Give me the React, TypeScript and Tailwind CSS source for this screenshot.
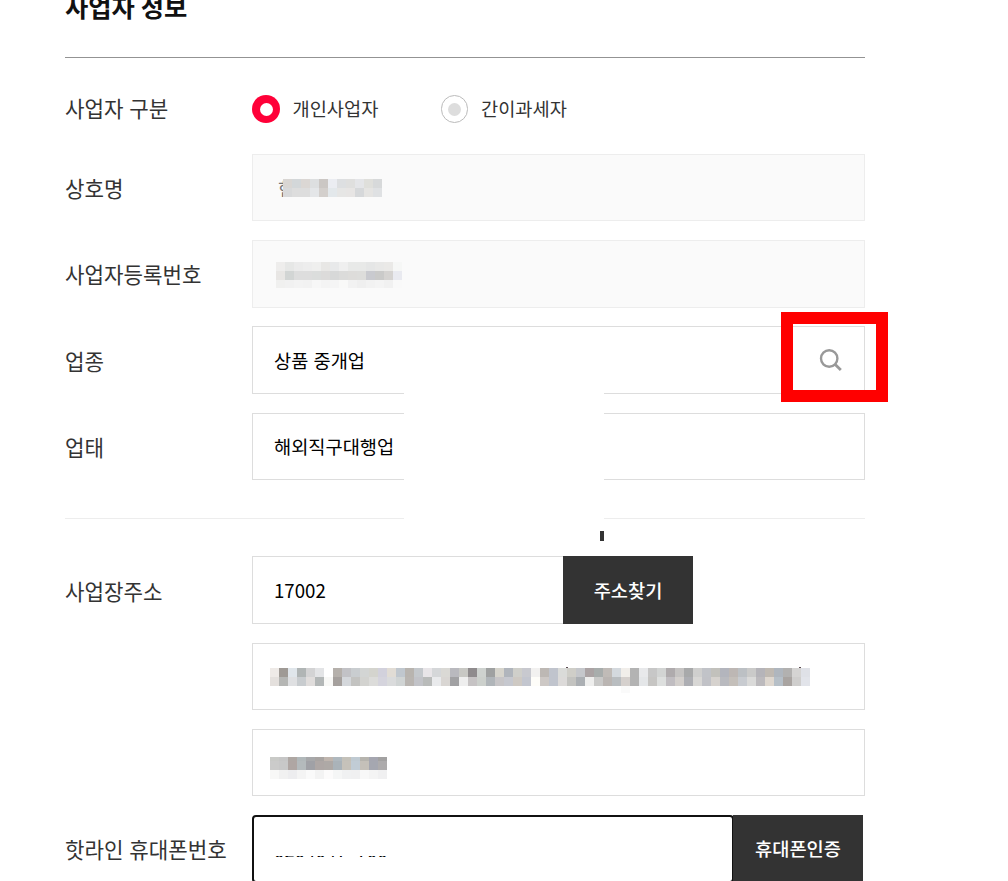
import { ReactNode } from 'react'

// 모자이크 한 칸은 9px
const nameMosaic = [
    'd9d6d3 d3d7d9 dbd7d4 dddfe0 cbc7c4 ebedf2 dddfe1 dfdfde e4e5e8 dfdfdb d7d9da',
    'd8d9da dddddd dddddd e4e6e8 d3cfcc e3e8eb e6e6e5 e7e5e4 d6d8da e5e4e2 dfe1e3',
]

const numberMosaic = [
    'eeedec e6e7e6 ebebeb ededed efefee e8e7e5 e8e9ea efefef e8e9e8 e8e9e8 e5e6e6 e8e8e7 eae9e7 f6f7f6',
    'e8e6e4 d2d5d4 dddddd dddddd dbdddc dcdbda d7d8d8 dbdbda dddcda dddddb c9cacf cacac9 d5d3d1 e9eaf0',
    'f0f0ef f1f1f1 f3f3f3 f2f2f2 f7f7f7 f4f4f4 f5f5f5 f9f9f8 f2f2f2 efefef f2f2f2 f4f4f4 f1f1f1 f9f9f9',
]

const addressMosaic = [
    'eeeae7 9f9a95 e0e6eb b0b5b5 d3d3d4 e3e4e6 ffffff b5b0ab c2c2c6 c9cdd0 d3d5d4 d4d4ce d2d1dc e1dcd5 c0c7ce b8b4af c4c8cc e8e5e8 d5d7d9 dad9d5 b9b9be c8c8c4 8f8b8d ced2cf 9fa1a1 d6d4cc b0b5bc cfcfca c8c9cf f2f1f0 bdb8b4 c0c4cd dadbd9 cfcec8 c5c7cb aba3a4 a8adac c0bbb7 d4d9de f1eeea b3b3b3 e8e9eb c7c7c7 d2d4d3 afabad c5c3c2 a8a9aa cfcfce c1c3c8 c2c1bc b3b5bd bdb7b4 bcc0c4 cacac9 b5b4b9 bfb9b2 afb6be b2b1b0 d5d4d3 dfe1e7',
    'e4e0dd b5b6b4 dfe0e2 c8cccf e0dddc b3b7b7 f8f8f6 a5a09d d4d7db c3c3c1 d3d3d0 dcdcda d5d4dd dadbdc d0d4d4 b9b5b1 c2c3c8 b9bbba e9eaec d9d6d3 a1a1a3 eeeeee c6c3c4 ccd0cc b0b5b9 c7c5c7 c6c8cf cec9c3 c3c6cf fefdf9 cdc8c5 c0c4cd dcdad9 c3c3c0 abafb3 eeeeed c9c9c8 bab5b2 b9bdc0 d5d0cd b3b3b3 e4e6e8 c6c5c3 dddfde c0bdc1 d3cfcc adaeb3 d8d7d5 c1c2c7 d6d2ce b9babf c4bfba c8cbd0 dadad9 bcbabd ded7cf b6bfc7 a9a4a1 cfcecd e2e4ea',
]

const detailMosaic = [
    'c9cac7 c6c6c6 aea7a3 b1b8ba a7a8aa a8a4a2 bfb5ae afb8be c4c1b9 bfcad2 b6b4ae a5a6b0 a2a1a1',
    'cbcbca c8c8c8 afa6a3 b4babc a0a1a6 aea7a5 aea9a6 aab3b9 c6c2ba c1ccd5 c4c0b9 a5a7b0 adabac',
    'f8f8f7 f1f1f1 ededef f4f4f4 fafafa f3f3f3 fcfbfb f5f6f6 f0f1f2 f0f0f1 f8f8f8 f4f4f4 f0f0f1',
]

const Mosaic = (props: { rows: string[], heights: number[] }) => {
    return (
        <div className="flex flex-col">
            {props.rows.map((row, i) => (
                <div className="flex" key={i} style={{ height: props.heights[i] }}>
                    {row.split(' ').map((color, j) => (
                        <span className="w-[9px] shrink-0" key={j} style={{ backgroundColor: `#${color}` }} />
                    ))}
                </div>
            ))}
        </div>
    )
}

const Label = (props: { children?: ReactNode, className?: string }) => {
    return (
        <div className={`w-[187px] shrink-0 text-[21.2px] leading-8 text-[#333] [word-spacing:1px] whitespace-nowrap ${props.className ?? 'pt-px'}`}>
            {props.children}
        </div>
    )
}

const SearchIcon = () => {
    return (
        <svg className="mb-px h-6 w-6" viewBox="0 0 24 24" fill="none" stroke="#999" strokeWidth="2.4">
            <circle cx="10.2" cy="10.5" r="8.2" />
            <path d="M16 16.3L21.8 22.1" strokeWidth="2.8" />
        </svg>
    )
}

export default function App() {
    return (
        <div className="relative h-[881px] w-[1008px] overflow-hidden bg-white font-['Noto_Sans_CJK_KR',sans-serif] text-[18.67px] text-black">
            <div className="ml-[65px] w-[800px]">
                <h2 className="-mt-[14px] h-[71px] text-[25.33px] leading-10 font-bold text-[#111]">사업자 정보</h2>
                <div className="h-px bg-[#939393]" />

                <div className="mt-[36px] flex h-[30px] items-center">
                    <Label className="pb-[3px]">사업자 구분</Label>
                    <div className="flex w-[189px] items-center">
                        <span className="flex h-7 w-7 items-center justify-center rounded-full bg-[#ff0038]">
                            <span className="h-[13px] w-[13px] rounded-full bg-white" />
                        </span>
                        <span className="ml-[12.5px] pb-0.5 text-[#333]">개인사업자</span>
                    </div>
                    <div className="flex items-center">
                        <span className="flex h-7 w-[27px] items-center justify-center rounded-full border border-[#bbb]">
                            <span className="h-[13px] w-[13px] rounded-full bg-[#ddd]" />
                        </span>
                        <span className="ml-[13px] pb-0.5 text-[#333]">간이과세자</span>
                    </div>
                </div>

                <div className="mt-[30px] flex h-[67px] items-center">
                    <Label>상호명</Label>
                    <div className="flex h-full flex-1 items-start border border-[#ededed] bg-[#fafafa] pt-6 pl-[25px]">
                        <span className="-mt-1 h-[22px] w-[5px] overflow-hidden leading-[26px] text-[#777]">현</span>
                        <Mosaic rows={nameMosaic} heights={[9, 9]} />
                    </div>
                </div>

                <div className="mt-[19px] flex h-[68px] items-center">
                    <Label className="pb-px">사업자등록번호</Label>
                    <div className="h-full flex-1 border border-[#ededed] bg-[#fafafa] pt-[21px] pl-[23px]">
                        <Mosaic rows={numberMosaic} heights={[9, 9, 8]} />
                    </div>
                </div>

                <div className="mt-[18px] flex h-[68px] items-center">
                    <Label>업종</Label>
                    <div className="flex h-full flex-1 items-center justify-between border border-[#ddd] pr-[21px] pl-[21px]">
                        <span className="[word-spacing:1px]">상품 중개업</span>
                        <SearchIcon />
                    </div>
                </div>

                <div className="mt-[19px] flex h-[67px] items-center">
                    <Label>업태</Label>
                    <div className="flex h-full flex-1 items-center border border-[#ddd] pl-[21px]">
                        <span className="relative z-10 pb-0.5">해외직구대행업</span>
                    </div>
                </div>

                <div className="mt-[38px] h-px bg-[#ededed]" />

                <div className="mt-[37px] flex h-[68px] items-center">
                    <Label>사업장주소</Label>
                    <div className="flex h-full w-[311px] items-center border border-r-0 border-[#ddd] pl-[21px]">17002</div>
                    <button className="h-full w-[130px] bg-[#333] font-medium text-white">주소찾기</button>
                </div>

                <div className="mt-[19px] flex h-[67px] items-center">
                    <Label />
                    <div className="relative h-full flex-1 border border-[#ddd] pt-6 pl-[17px]">
                        <Mosaic rows={addressMosaic} heights={[9, 9]} />
                        <span className="absolute top-[23px] left-[313px] h-px w-[2px] bg-[#5a4a50]" />
                        <span className="absolute top-[23px] left-[546px] h-px w-[2px] bg-[#5a4a50]" />
                        <span className="absolute top-[42px] left-[368px] h-[7px] w-[9px] bg-[#fafafa]" />
                    </div>
                </div>

                <div className="mt-[19px] flex h-[67px] items-center">
                    <Label />
                    <div className="h-full flex-1 border border-[#ddd] pt-[27px] pl-[17px]">
                        <Mosaic rows={detailMosaic} heights={[4, 9, 9]} />
                    </div>
                </div>

                <div className="mt-[19px] flex h-[68px] items-center">
                    <Label className="pb-px">핫라인 휴대폰번호</Label>
                    <div className="-mr-px h-full w-[482px] shrink-0 rounded-[4px] border-2 border-[#111] pt-[39px] pl-[20px]">
                        {/* 번호는 아랫줄만 보이게 가린다 */}
                        <div className="flex h-px items-end overflow-hidden leading-[14px]">
                            <span>0204047</span>
                            <span className="ml-[10px]">700</span>
                        </div>
                    </div>
                    <button className="relative h-full w-[130px] bg-[#333] pb-0.5 font-medium text-white">휴대폰인증</button>
                </div>
            </div>

            {/* 지워진 영역 */}
            <div className="absolute top-[393px] left-[404px] h-[138px] w-[200px] bg-white" />
            <div className="absolute top-[531px] left-[600px] h-[10px] w-1 bg-[#333]" />
            {/* 검색 버튼 강조 */}
            <div className="absolute top-[312px] left-[781px] h-[90px] w-[107px] border-[12px] border-[#ff0000]" />
        </div>
    )
}
